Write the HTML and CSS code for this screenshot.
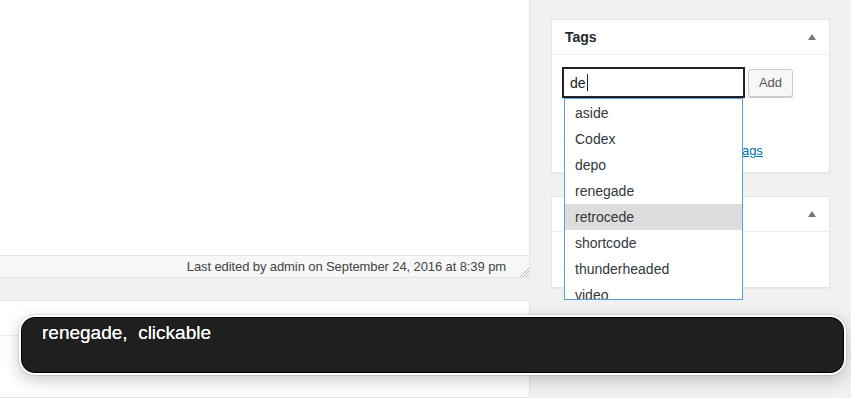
FILE: index.html
```html
<!DOCTYPE html>
<html lang="en">
<head>
    <meta charset="UTF-8">
    <meta name="viewport" content="width=device-width, initial-scale=1.0">
    <title>Edit Post</title>
    <link rel="stylesheet" href="styles.css">
</head>
<body>
    <div class="page">
        <div class="main">
            <div class="editor"></div>
            <div class="status">
                <span>Last edited by admin on September 24, 2016 at 8:39 pm</span>
                <svg class="grip" width="10" height="10" viewBox="0 0 10 10">
                    <line x1="10" y1="1" x2="1" y2="10" stroke="#b4b9be" stroke-width="1"/>
                    <line x1="10" y1="4" x2="4" y2="10" stroke="#b4b9be" stroke-width="1"/>
                    <line x1="10" y1="7" x2="7" y2="10" stroke="#b4b9be" stroke-width="1"/>
                </svg>
            </div>
            <div class="lower-box">
                <div class="lower-head"></div>
            </div>
        </div>

        <div class="side">
            <div class="box tags-box">
                <div class="box-head">
                    <h2>Tags</h2>
                    <span class="toggle"></span>
                </div>
                <div class="box-body">
                    <div class="tag-row">
                        <div class="tag-input">de<span class="caret"></span></div>
                        <button class="add-button">Add</button>
                    </div>
                    <p class="tag-cloud-link"><a href="#">Choose from the most used tags</a></p>
                </div>

                <ul class="suggest">
                    <li>aside</li>
                    <li>Codex</li>
                    <li>depo</li>
                    <li>renegade</li>
                    <li class="active">retrocede</li>
                    <li>shortcode</li>
                    <li>thunderheaded</li>
                    <li>video</li>
                </ul>
            </div>

            <div class="box second-box">
                <div class="box-head">
                    <h2></h2>
                    <span class="toggle"></span>
                </div>
                <div class="box-body empty"></div>
            </div>
        </div>
    </div>

    <div class="tooltip">renegade,&nbsp; clickable</div>
</body>
</html>
```

FILE: styles.css
```css
* {
    box-sizing: border-box;
}
body {
    margin: 0;
    height: 398px;
    overflow: hidden;
    background: #f1f1f1;
    font-family: "Liberation Sans", Arial, sans-serif;
    color: #32373c;
}
.page {
    display: flex;
    height: 398px;
}
.main {
    width: 530px;
    flex: none;
    display: flex;
    flex-direction: column;
}
.editor {
    height: 255px;
    background: #fff;
    border-right: 1px solid #e5e5e5;
}
.status {
    height: 23px;
    display: flex;
    justify-content: flex-end;
    align-items: center;
    background: #f7f7f7;
    border: 1px solid #e5e5e5;
    border-left: none;
    font-size: 13px;
    letter-spacing: -0.1px;
    color: #444;
}
.grip {
    align-self: flex-end;
    margin-left: 13px;
}
.lower-box {
    flex: 1;
    margin-top: 22px;
    background: #fff;
    border: 1px solid #e5e5e5;
    border-left: none;
}
.lower-head {
    height: 35px;
    border-bottom: 1px solid #eee;
}
.side {
    width: 321px;
    padding: 19px 21px 0 21px;
}
.box {
    position: relative;
    background: #fff;
    border: 1px solid #e5e5e5;
    box-shadow: 0 1px 1px rgba(0,0,0,0.04);
}
.box-head {
    height: 35px;
    display: flex;
    align-items: center;
    justify-content: space-between;
    padding: 0 13px;
    border-bottom: 1px solid #eee;
}
.box-head h2 {
    margin: 0;
    font-size: 14px;
    font-weight: 600;
    color: #23282d;
}
.toggle {
    width: 0;
    height: 0;
    border-left: 4px solid transparent;
    border-right: 4px solid transparent;
    border-bottom: 6px solid #72777c;
}
.box-body {
    padding: 12px 12px 12px 10px;
}
.box-body.empty {
    height: 55px;
}
.second-box {
    margin-top: 23px;
}
.tag-row {
    display: flex;
    align-items: center;
}
.tag-input {
    width: 183px;
    height: 31px;
    padding: 0 6px;
    display: flex;
    align-items: center;
    border: 2px solid #222;
    font-size: 14px;
    color: #222;
}
.caret {
    display: inline-block;
    width: 1px;
    height: 17px;
    margin-left: 1px;
    background: #222;
}
.add-button {
    margin-left: 3px;
    width: 45px;
    height: 28px;
    padding: 0;
    background: #f7f7f7;
    border: 1px solid #ccc;
    border-radius: 3px;
    box-shadow: 0 1px 0 #ccc;
    font-family: inherit;
    font-size: 13px;
    color: #555;
}
.tag-cloud-link {
    margin: 44px 0 0 13px;
    font-size: 13px;
    line-height: 18px;
}
.tag-cloud-link a {
    color: #0073aa;
}
.suggest {
    position: absolute;
    z-index: 5;
    left: 12px;
    top: 78px;
    width: 179px;
    height: 202px;
    margin: 0;
    padding: 1px 0 0 0;
    list-style: none;
    overflow: hidden;
    background: #fff;
    border: 1px solid #5b9dd9;
    font-size: 14px;
    color: #32373c;
}
.suggest li {
    height: 26px;
    line-height: 26px;
    padding-left: 10px;
}
.suggest li.active {
    background: #ddd;
}
.tooltip {
    position: absolute;
    z-index: 10;
    left: 19px;
    top: 315px;
    width: 827px;
    height: 60px;
    padding: 5px 0 0 21px;
    background: #1f1f1f;
    border: 2px solid #fff;
    border-radius: 16px;
    box-shadow: inset 0 0 0 1px #000, 0 0 0 1px rgba(0,0,0,0.08), 0 5px 16px rgba(0,0,0,0.22);
    font-size: 19px;
    line-height: 22px;
    color: #fff;
    text-shadow: 0 0 0.6px #fff, 0 0 1px #000;
}
```
